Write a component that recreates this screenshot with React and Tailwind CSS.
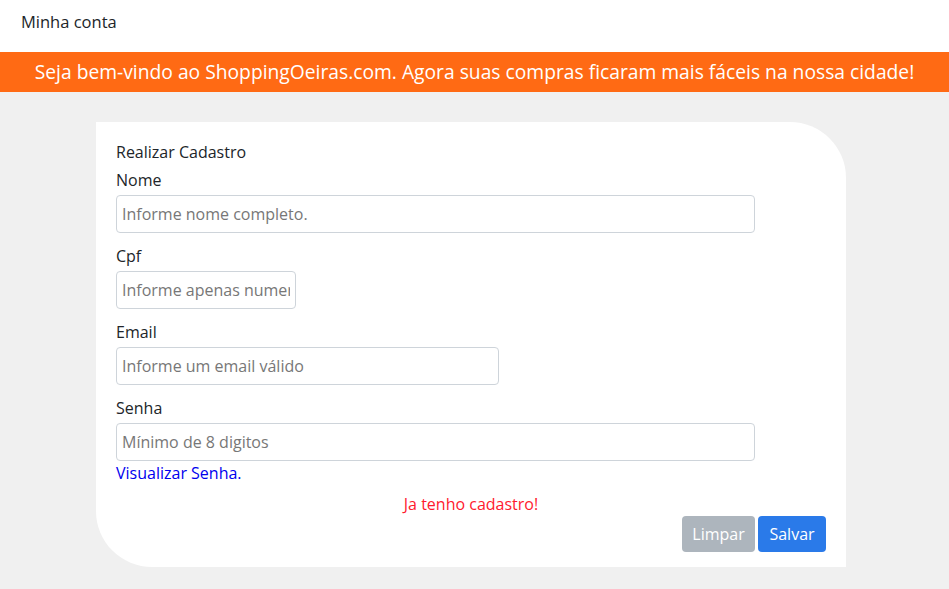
import React from "react";

const font = { fontFamily: '"Open Sans", "Noto Sans", sans-serif' };

function Field({ label, placeholder, width, type = "text" }) {
  return (
    <div className="flex flex-col mb-[11px]">
      <label className="text-[16px] leading-[24px] text-[#212529] mb-[3px]">{label}</label>
      <input
        type={type}
        placeholder={placeholder}
        className={`${width} h-[38px] border border-[#ced4da] rounded-[4px] px-[5px] text-[16px] text-[#212529] placeholder:text-[#777] outline-none bg-white`}
      />
    </div>
  );
}

export default function App() {
  return (
    <div className="min-h-[589px] bg-[#f0f0f0]" style={font}>
      <div className="h-[52px] bg-white flex items-start pt-[10px] px-[21px]">
        <span className="text-[16.5px] leading-[24px] text-[#212529]">Minha conta</span>
      </div>
      <div className="h-[40px] bg-[#ff6a14] flex items-center justify-center">
        <span className="text-white text-[19.25px] leading-none">
          Seja bem-vindo ao ShoppingOeiras.com. Agora suas compras ficaram mais fáceis na nossa cidade!
        </span>
      </div>
      <div className="pt-[30px] pl-[96px]">
        <div className="w-[750px] bg-white rounded-tr-[56px] rounded-bl-[56px] pt-[18px] px-[20px] pb-[15px]">
          <div className="text-[16px] leading-[24px] text-[#212529] mb-[4px]">Realizar Cadastro</div>
          <Field label="Nome" placeholder="Informe nome completo." width="w-[639px]" />
          <Field label="Cpf" placeholder="Informe apenas numeros" width="w-[180px]" />
          <Field label="Email" placeholder="Informe um email válido" width="w-[383px]" />
          <div className="flex flex-col">
            <label className="text-[16px] leading-[24px] text-[#212529] mb-[3px]">Senha</label>
            <input
              type="password"
              placeholder="Mínimo de 8 digitos"
              className="w-[639px] h-[38px] border border-[#ced4da] rounded-[4px] px-[5px] text-[16px] placeholder:text-[#777] outline-none bg-white"
            />
          </div>
          <div className="text-[16px] leading-[24px] text-[#0000ee]">Visualizar Senha.</div>
          <div className="mt-[7px] text-center text-[16px] leading-[24px] text-[#ff1a2e]">Ja tenho cadastro!</div>
          <div className="flex justify-end gap-[3px]">
            <button className="h-[36px] w-[73px] rounded-[4px] bg-[#adb5bd] text-white text-[16px] font-medium">Limpar</button>
            <button className="h-[36px] w-[68px] rounded-[4px] bg-[#2a7ae9] text-white text-[16px] font-medium">Salvar</button>
          </div>
        </div>
      </div>
    </div>
  );
}
